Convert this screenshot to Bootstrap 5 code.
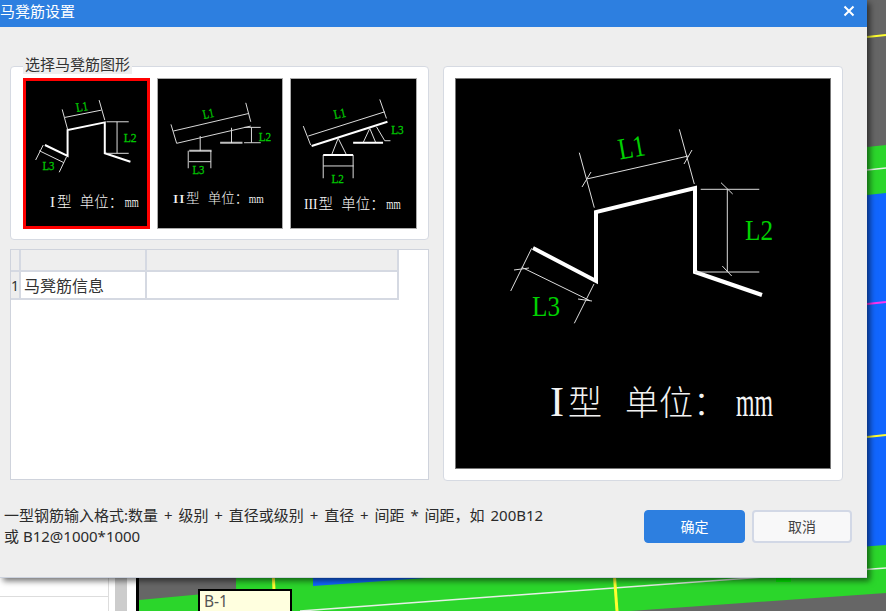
<!DOCTYPE html>
<html lang="zh-CN">
<head>
    <meta charset="UTF-8">
    <meta name="viewport" content="width=device-width, initial-scale=1.0">
    <title>马凳筋设置</title>
    <link href="https://cdn.jsdelivr.net/npm/bootstrap@5.3.0/dist/css/bootstrap.min.css" rel="stylesheet">
    <style>
        body { margin: 0; width: 886px; height: 611px; overflow: hidden; background: #666; font-family: "Noto Sans", "Noto Sans CJK SC", sans-serif; color: #333; }
        .scene { position: absolute; left: 0; top: 0; }
        .tip-box { position: absolute; left: 198px; top: 589px; width: 94px; height: 30px; background: #ffffdf; border: 2px solid #000; padding: 0 0 0 4px; font-size: 15.5px; line-height: 21px; color: #555; }
        .dlg { position: absolute; left: 0; top: 0; width: 867px; height: 578px; background: #eee; box-shadow: 3px 3px 6px rgba(0,0,0,.55); border-bottom: 1px solid #ccd2de; }
        .dlg-title { height: 27px; background: #2d7fe0; color: #fff; font-size: 15px; line-height: 20px; padding: 0 12px 5px 0; }
        .dlg-main { padding: 39px 24px 0 10px; gap: 14px; }
        .left-col { width: 419px; gap: 9px; }
        .panel { background: #fff; border: 1px solid #d6dae2; border-radius: 4px; }
        .pick-panel { height: 174px; padding: 11px 11px 0 12px; gap: 7px; position: relative; }
        .pick-title { position: absolute; left: 12px; top: -13px; background: #eee; font-size: 15px; line-height: 20px; padding: 0 2px; color: #333; }
        .thumb { width: 127px; height: 151px; background: #000; display: block; outline: 1px solid #aaa; outline-offset: -1px; }
        .thumb-on { outline: 3px solid #f00; outline-offset: -3px; }
        .info-panel { height: 231px; border-color: #cfd3dc; border-radius: 0; }
        .info-tbl { width: 387px; table-layout: fixed; border-collapse: collapse; }
        .info-tbl td { border: 2px solid #d5d9e2; border-top: 0; padding: 0; font-size: 16px; height: 21px; background: #fff; color: #333; }
        .info-tbl td.hd { background: #eee; }
        .info-tbl td.no { background: #eee; border-left: 0; font-size: 14px; text-align: center; line-height: 1; }
        .info-tbl tr.data-row td { height: 26px; padding: 2px 0 0 3px; }
        .info-tbl tr.data-row td.no { padding-left: 0; }
        .view-panel { width: 400px; height: 415px; padding: 11px 11px 0 11px; }
        .big-view { width: 376px; height: 391px; background: #000; display: block; outline: 1px solid #777; outline-offset: -1px; }
        .foot-row { padding: 29px 15px 0 4px; }
        .hint { width: 570px; font-size: 15px; line-height: 21px; color: #2b2b2b; margin-top: -5px; }
        .hint-wide { word-spacing: 2px; }
        .btn-gap { gap: 7px; }
        .btn-ok, .btn-no { height: 33px; width: 100px; padding: 0; font-size: 14px; border-radius: 4px; }
        .btn-ok { width: 101px; background: #2d7fe0; border: 1px solid #2d7fe0; color: #fff; }
        .btn-no { background: #f8f8f9; border: 2px solid #d2d8e6; color: #444; }
        .thick { fill: none; stroke: #fff; stroke-width: 4; }
        .thick2 { fill: none; stroke: #fff; stroke-width: 2; }
        .thin { fill: none; stroke: #ddd; stroke-width: 1; }
        .thin2 { fill: none; stroke: #d8d8d8; stroke-width: 1; }
        .grn { fill: #00d000; font-family: "Liberation Serif", serif; }
        .grn-sm { fill: #00c800; stroke: #00c800; stroke-width: .3; font-family: "Liberation Serif", serif; }
        .wht { fill: #f4f4f4; font-family: "Liberation Serif", serif; }
        .cjk { fill: #f2f2f2; font-family: "Noto Sans CJK SC", sans-serif; font-weight: 300; }
    </style>
</head>
<body>
    <!-- drawing behind the dialog -->
    <svg class="scene" width="886" height="611" viewBox="0 0 886 611">
        <rect width="886" height="611" fill="#666"/>
        <polygon points="867,147 886,145 886,593 630,611 139,611 139,600 236,591 236,570 867,570" fill="#2bd62b"/>
        <polygon points="867,195 886,193 886,545 313,586 313,570 867,570" fill="#1166ff"/>
        <line x1="867" y1="37" x2="886" y2="35" stroke="#ffff30" stroke-width="2"/>
        <line x1="867" y1="170" x2="886" y2="168" stroke="#e6f0e6" stroke-width="1.5"/>
        <line x1="867" y1="304" x2="886" y2="302" stroke="#ff33ee" stroke-width="2"/>
        <line x1="867" y1="437" x2="886" y2="435" stroke="#ffff30" stroke-width="2"/>
        <line x1="300" y1="611" x2="886" y2="568" stroke="#e6f0e6" stroke-width="1.5"/>
        <line x1="273" y1="570" x2="274" y2="590" stroke="#ffff30" stroke-width="3"/>
        <line x1="614" y1="570" x2="617" y2="611" stroke="#ffff30" stroke-width="3"/>
        <rect x="776" y="578" width="15" height="4" fill="#00ee00"/>
        <rect x="0" y="570" width="136" height="41" fill="#fff"/>
        <rect x="0" y="596" width="108" height="1" fill="#ddd"/>
        <rect x="108" y="570" width="1" height="41" fill="#ddd"/>
        <rect x="115" y="570" width="12" height="41" fill="#ccc"/>
        <rect x="136" y="570" width="3" height="41" fill="#000"/>
    </svg>
    <div class="tip-box">B-1</div>

    <div class="dlg d-flex flex-column">
        <div class="dlg-title d-flex justify-content-between align-items-center">
            <span>马凳筋设置</span>
            <svg width="12" height="12" viewBox="0 0 12 12"><path d="M1.5 1.5 10.5 10.5M10.5 1.5 1.5 10.5" stroke="#fff" stroke-width="2" fill="none"/></svg>
        </div>

        <div class="dlg-main d-flex">
            <div class="left-col d-flex flex-column">
                <div class="panel pick-panel d-flex">
                    <div class="pick-title">选择马凳筋图形</div>

                    <svg class="thumb thumb-on" viewBox="23 78 127 151">
                        <polyline class="thick2" points="45,145 67.7,156 67.7,130 105,122.3 105,153.3 130.7,161.7"/>
                        <path class="thin" d="M62.3 109.3 67.7 129.3M99.3 100 105 120M65 117.3 101.7 110M106.7 121.7H129M106.7 153.3H129M117.3 121.7V153.3M43.3 145 35.7 160M66.7 156.7 59.3 172.3M39.3 150.7 64 162.7"/>
                        <text class="grn-sm" x="77" y="112" font-size="13" textLength="12" lengthAdjust="spacingAndGlyphs" transform="rotate(-10 77 112)">L1</text>
                        <text class="grn-sm" x="124" y="142" font-size="13" textLength="13" lengthAdjust="spacingAndGlyphs">L2</text>
                        <text class="grn-sm" x="42.5" y="170" font-size="13" textLength="12" lengthAdjust="spacingAndGlyphs">L3</text>
                        <text class="wht" x="50" y="207" font-size="15">I</text>
                        <text class="cjk" x="57" y="207" font-size="14.5">型</text>
                        <text class="cjk" x="80" y="207" font-size="14.5">单位：</text>
                        <text class="wht" x="125" y="207" font-size="14" textLength="14" lengthAdjust="spacingAndGlyphs">mm</text>
                    </svg>

                    <svg class="thumb" viewBox="156 78 127 151">
                        <path class="thin2" d="M172.3 131 248.3 113.3M170 124.3 175.7 143.3M245 102.7 250 121.7M175.7 143.3 250 126M199.3 136V150.7M187.3 150.7V168.3M210 150.7V168.3M188 161.7H210M230.7 127.7V142.7M243.3 127.3H260M243.3 142.7H260M250.7 127.3V142.7"/>
                        <path class="thick2" stroke-width="1.5" d="M188.3 150.7H210.7M219.3 142.7H241.7" opacity=".75"/>
                        <text class="grn-sm" x="203" y="119" font-size="13" textLength="11" lengthAdjust="spacingAndGlyphs" transform="rotate(-12 203 119)">L1</text>
                        <text class="grn-sm" x="258" y="140.5" font-size="13" textLength="12.5" lengthAdjust="spacingAndGlyphs">L2</text>
                        <text class="grn-sm" x="191.5" y="174" font-size="13" textLength="12" lengthAdjust="spacingAndGlyphs">L3</text>
                        <text class="wht" x="171.5" y="203" font-size="13" textLength="12.5" lengthAdjust="spacingAndGlyphs">II</text>
                        <text class="cjk" x="185" y="203" font-size="13.5">型</text>
                        <text class="cjk" x="207" y="203" font-size="13.5">单位：</text>
                        <text class="wht" x="248" y="203" font-size="13" textLength="15" lengthAdjust="spacingAndGlyphs">mm</text>
                    </svg>

                    <svg class="thumb" viewBox="290 78 127 151">
                        <line class="thick2" x1="311.7" y1="146" x2="387.7" y2="121.7" stroke-width="3"/>
                        <path class="thin" d="M308.3 136 385 111.7M303.3 126 310.7 145M380 99.3 386.7 118.3M338.3 138.3 331.7 155M338.3 138.3 346.7 155M323.3 155V178.3M353.3 155V178.3M323.3 166H353.8M370 128.3 363.3 142.7M370 128.3 376 142.7M376.7 126.7 385 140.7H390.7"/>
                        <path class="thick2" d="M323.3 155H353.3M353.3 142.7H383.3"/>
                        <text class="grn-sm" x="335" y="119" font-size="13" textLength="12" lengthAdjust="spacingAndGlyphs" transform="rotate(-12 335 119)">L1</text>
                        <text class="grn-sm" x="391.5" y="134" font-size="13" textLength="12.5" lengthAdjust="spacingAndGlyphs">L3</text>
                        <text class="grn-sm" x="331.5" y="183" font-size="13" textLength="12.5" lengthAdjust="spacingAndGlyphs">L2</text>
                        <text class="wht" x="304" y="209" font-size="15" textLength="13.5" lengthAdjust="spacingAndGlyphs">III</text>
                        <text class="cjk" x="318.5" y="209" font-size="14.5">型</text>
                        <text class="cjk" x="341.5" y="209" font-size="14.5">单位：</text>
                        <text class="wht" x="386.5" y="209" font-size="14" textLength="14.5" lengthAdjust="spacingAndGlyphs">mm</text>
                    </svg>
                </div>

                <div class="panel info-panel">
                    <table class="info-tbl">
                        <colgroup><col style="width:9px"><col style="width:126px"><col style="width:252px"></colgroup>
                        <tr><td class="no"></td><td class="hd"></td><td class="hd"></td></tr>
                        <tr class="data-row"><td class="no">1</td><td>马凳筋信息</td><td></td></tr>
                    </table>
                </div>
            </div>

            <div class="panel view-panel">
                <svg class="big-view" viewBox="455 78 376 391">
                    <polyline class="thick" points="533,248 596,281 596,212 695,188 695,272 762,295"/>
                    <path class="thin" d="M579.3 152.7 594.3 207.7M679.3 129.3 694.3 184M586.7 179 688.3 156M582 187 591 172M684 164 692 150"/>
                    <path class="thin" d="M700.7 189.3H759.3M695 272H759.3M727.3 189.3V272M721 182.7 732.7 194M722.3 266 731.7 276"/>
                    <path class="thin" d="M531.7 248.3 510.7 291M594 284 574.3 323.3M521.7 267.3 590 300.7M514 270 529 268M578 299 592 301"/>
                    <text class="grn" x="620" y="159.5" font-size="30" textLength="27" lengthAdjust="spacingAndGlyphs" transform="rotate(-10 620 159.5)">L1</text>
                    <text class="grn" x="745" y="239.5" font-size="30" textLength="28" lengthAdjust="spacingAndGlyphs">L2</text>
                    <text class="grn" x="532" y="316" font-size="30" textLength="28" lengthAdjust="spacingAndGlyphs">L3</text>
                    <text class="wht" x="550" y="416" font-size="42">I</text>
                    <text class="cjk" x="568" y="415" font-size="34">型</text>
                    <text class="cjk" x="625" y="415" font-size="34">单位：</text>
                    <text class="wht" x="736" y="416" font-size="42" textLength="37" lengthAdjust="spacingAndGlyphs">mm</text>
                </svg>
            </div>
        </div>

        <div class="foot-row d-flex justify-content-between align-items-start">
            <div class="hint"><span class="hint-wide">一型钢筋输入格式:数量 + 级别 + 直径或级别 + 直径 + 间距 * 间距，如 200B12</span><br>或 B12@1000*1000</div>
            <div class="d-flex btn-gap">
                <button type="button" class="btn btn-ok">确定</button>
                <button type="button" class="btn btn-no">取消</button>
            </div>
        </div>
    </div>
    <script src="https://cdn.jsdelivr.net/npm/bootstrap@5.3.0/dist/js/bootstrap.bundle.min.js"></script>
</body>
</html>
